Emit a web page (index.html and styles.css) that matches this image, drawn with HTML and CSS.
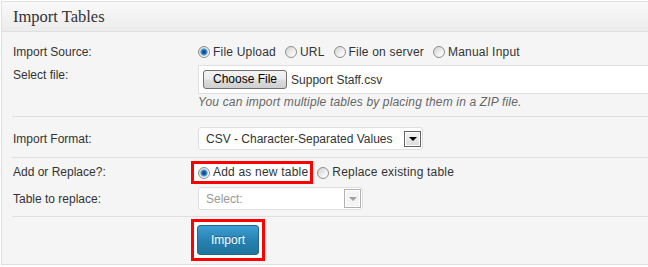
FILE: index.html
```html
<!DOCTYPE html>
<html>
<head>
<meta charset="utf-8">
<link rel="stylesheet" href="styles.css">
</head>
<body>
<div class="panel">
  <h3 class="hndle">Import Tables</h3>
  <div class="inside">
    <div class="group g1">
      <div class="row r-source">
        <div class="label">Import Source:</div>
        <div class="field opts">
          <span class="opt"><span class="radio checked"></span>File Upload</span>
          <span class="opt"><span class="radio"></span>URL</span>
          <span class="opt"><span class="radio"></span>File on server</span>
          <span class="opt"><span class="radio"></span>Manual Input</span>
        </div>
      </div>
      <div class="row r-file">
        <div class="label">Select file:</div>
        <div class="field">
          <div class="filebox"><span class="filebtn">Choose File</span><span class="filename">Support Staff.csv</span></div>
          <p class="desc">You can import multiple tables by placing them in a ZIP file.</p>
        </div>
      </div>
    </div>
    <div class="group g2">
      <div class="row r-format">
        <div class="label">Import Format:</div>
        <div class="field">
          <div class="select fmt"><span class="sel-text">CSV - Character-Separated Values</span><span class="arrow"></span></div>
        </div>
      </div>
    </div>
    <div class="group g3">
      <div class="row r-add">
        <div class="label">Add or Replace?:</div>
        <div class="field opts">
          <span class="opt mark"><span class="radio checked"></span>Add as new table</span>
          <span class="opt"><span class="radio"></span>Replace existing table</span>
        </div>
      </div>
      <div class="row r-replace">
        <div class="label">Table to replace:</div>
        <div class="field">
          <div class="select disabled"><span class="sel-text">Select:</span><span class="arrow"></span></div>
        </div>
      </div>
    </div>
    <div class="group g4">
      <div class="row r-submit">
        <div class="label"></div>
        <div class="field">
          <span class="mark-btn"><span class="btn-primary">Import</span></span>
        </div>
      </div>
    </div>
  </div>
</div>
</body>
</html>
```

FILE: styles.css
```css
html, body {
  margin: 0;
  padding: 0;
  background: #fff;
  overflow: hidden;
}
body {
  font-family: "Liberation Sans", Arial, sans-serif;
  font-size: 12px;
  color: #333;
}
.panel {
  margin: 1px 0 0 1px;
  border: 1px solid #dfdfdf;
  border-right: none;
  background: #f5f5f5;
}
.hndle {
  margin: 0;
  height: 29px;
  line-height: 30px;
  padding-left: 11px;
  border-bottom: 1px solid #dfdfdf;
  background: linear-gradient(#f9f9f9, #ececec);
  font-family: "Liberation Serif", "Times New Roman", serif;
  font-size: 16.5px;
  font-weight: normal;
  color: #333;
}
.inside {
  padding-left: 10px;
}
.group {
  border-bottom: 1px solid #dfdfdf;
}
.group.g4 {
  border-bottom: none;
}
.g1 { padding: 10px 0 5px; }
.g2 { padding: 10px 0 7px; }
.g3 { padding: 6px 0 6px; }
.g4 { padding: 8px 0 9px; }

.row {
  display: grid;
  grid-template-columns: 186px 1fr;
}
.field {
  min-width: 0;
}
.label {
  padding-left: 1px;
  line-height: 20px;
  color: #333;
}
.r-source { height: 20px; align-items: center; }
.r-file { margin-top: 3px; }
.r-format, .r-replace { height: 23px; align-items: center; }
.r-add { height: 17px; align-items: center; margin-bottom: 6px; }
.r-add .label { line-height: 17px; }

.opts {
  display: flex;
  align-items: center;
  gap: 9px;
  white-space: nowrap;
}
.opt {
  display: inline-flex;
  align-items: center;
  line-height: 17px;
  color: #333;
  letter-spacing: 0.2px;
}
.radio {
  width: 12px;
  height: 12px;
  box-sizing: border-box;
  border-radius: 50%;
  border: 1px solid #8d8f91;
  background: linear-gradient(135deg, #d0d0d0, #f6f6f6 70%, #ffffff);
  margin-right: 3px;
  flex: none;
}
.radio.checked {
  background:
    radial-gradient(circle at 50% 50%, #0d3c66 0, #1a5f98 1.6px, #3f8fd0 2.8px, #9cc9ec 3.6px, rgba(255,255,255,0) 4.2px),
    linear-gradient(135deg, #d0d0d0, #f6f6f6 70%, #ffffff);
}

.filebox {
  height: 29px;
  box-sizing: border-box;
  border: 1px solid #dfdfdf;
  border-right: none;
  background: #fff;
  display: flex;
  align-items: center;
  padding-left: 4px;
  gap: 4px;
  white-space: nowrap;
}
.filebtn {
  height: 19px;
  box-sizing: border-box;
  padding: 0 9px;
  border: 1px solid #707070;
  border-radius: 3px;
  background: linear-gradient(#f3f3f3, #ebebeb 48%, #dddddd 52%, #cfcfcf);
  color: #000;
  line-height: 17px;
  white-space: nowrap;
  flex: none;
}
.filename {
  color: #333;
}
.desc {
  margin: 0;
  line-height: 17px;
  font-style: italic;
  color: #666;
  white-space: nowrap;
  letter-spacing: 0.16px;
}

.select {
  height: 23px;
  box-sizing: border-box;
  border: 1px solid #dfdfdf;
  border-radius: 3px;
  background: #fff;
  display: flex;
  align-items: center;
  justify-content: space-between;
  padding: 0 1px 0 7px;
}
.select.fmt { width: 225px; }
.select.disabled { width: 165px; }
.sel-text { color: #333; white-space: nowrap; }
.disabled .sel-text { color: #999; }
.arrow {
  width: 17px;
  height: 16px;
  box-sizing: border-box;
  border: 1px solid #626262;
  background: linear-gradient(#f4f4f4, #dcdcdc);
  box-shadow: inset 0 0 0 1px #fff;
  display: flex;
  align-items: center;
  justify-content: center;
  flex: none;
}
.arrow::after {
  content: "";
  border-left: 4px solid transparent;
  border-right: 4px solid transparent;
  border-top: 4px solid #000;
  margin-top: 1px;
}
.disabled .arrow {
  width: 17px;
  height: 19px;
  border-color: #b0b0b0;
  background: #f4f4f4;
}
.disabled .arrow::after {
  border-top-color: #a0a0a0;
}

.mark {
  border: 3px solid #f00;
  background: #fff;
  padding: 0 2px 0 4px;
  margin: -3px -5px -3px -7px;
}

.mark-btn {
  display: inline-block;
  border: 3px solid #f00;
  padding: 3px;
  background: #fff;
  margin: -6px 0 -6px -7px;
  line-height: 0;
}
.btn-primary {
  display: inline-block;
  width: 62px;
  height: 30px;
  box-sizing: border-box;
  border: 1px solid #1e6a93;
  border-radius: 3px;
  background: linear-gradient(#3c9fd3, #2580b0 55%, #21759b);
  color: #fff;
  text-align: center;
  line-height: 28px;
  font-size: 12px;
  text-shadow: 0 -1px 0 rgba(0,0,0,0.3);
}
```
